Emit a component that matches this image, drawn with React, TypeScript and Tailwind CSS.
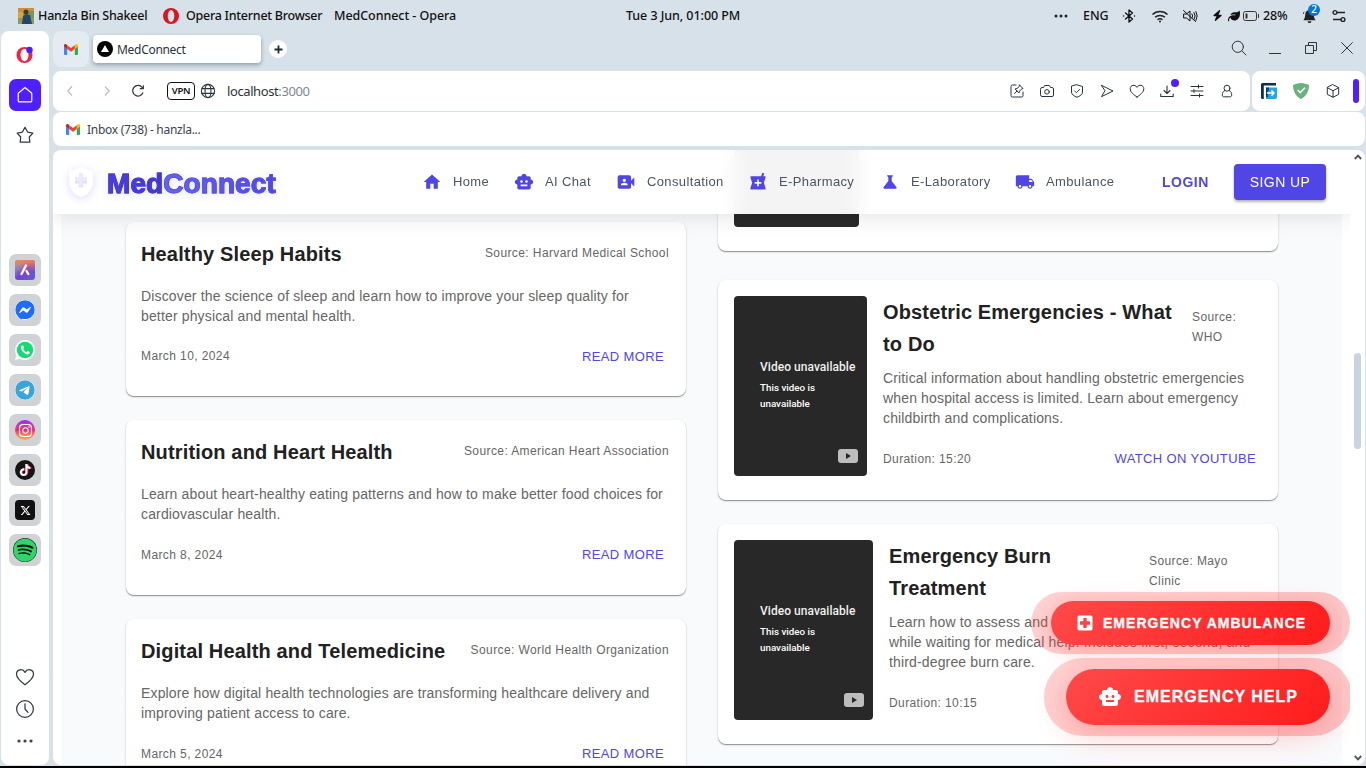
import type { ReactNode } from "react";
import { MdHome, MdSmartToy, MdVideoCameraFront, MdLocalPharmacy, MdScience, MdLocalShipping, MdLocalHospital, MdHealthAndSafety } from "react-icons/md";
import { FaTiktok, FaXTwitter, FaSpotify, FaFacebookMessenger, FaInstagram, FaTelegram, FaLeaf, FaBolt } from "react-icons/fa6";

function Line({ size = 16, w = 1.3, children, className = "" }: { size?: number; w?: number; children: ReactNode; className?: string }) {
  return (
    <svg width={size} height={size} viewBox="0 0 16 16" fill="none" stroke="currentColor" strokeWidth={w} strokeLinecap="round" strokeLinejoin="round" className={"shrink-0 " + className}>
      {children}
    </svg>
  );
}

function Gmail() {
  return (
    <svg width="14" height="11" viewBox="0 0 14 11" className="shrink-0">
      <path d="M0 2v8a1 1 0 0 0 1 1h2.2V4.4z" fill="#4285f4" />
      <path d="M14 2v8a1 1 0 0 1-1 1h-2.2V4.4z" fill="#34a853" />
      <path d="M10.8 1.2V5L14 2.6V1.5C14 .2 12.600-.400 11.600.400z" fill="#fbbc04" />
      <path d="M3.200 5V1.200L7 4l3.800-2.800V5L7 7.800z" fill="#ea4335" />
      <path d="M0 1.500v1.100L3.200 5V1.200L2.400.400C1.400-.400 0 .200 0 1.500z" fill="#c5221f" />
    </svg>
  );
}

function StatusBar() {
  return (
    <div className="flex h-[31px] shrink-0 items-center text-[12.500px] font-medium text-[#111]">
      <div className="ml-[18px] h-4 w-4 shrink-0">
        <svg width="16" height="16" viewBox="0 0 16 16">
          <rect width="16" height="16" fill="#8f9a5a" />
          <rect width="16" height="4" fill="#c9913e" />
          <rect y="4" width="5" height="6" fill="#d9a441" />
          <rect x="11" y="3" width="5" height="7" fill="#6f9a62" />
          <path d="M4 16l1-8 3-2 4 1 2 9z" fill="#24466b" />
          <circle cx="8" cy="4" r="2.500" fill="#4a3428" />
        </svg>
      </div>
      <div className="ml-1 w-[125px] pt-[2px] whitespace-nowrap tracking-[-0.220px]">Hanzla Bin Shakeel</div>
      <svg width="16" height="16" viewBox="0 0 16 16" className="shrink-0">
        <ellipse cx="8" cy="8" rx="8" ry="8" fill="#d8141c" />
        <ellipse cx="8" cy="8" rx="3.300" ry="6" fill="#d7e1e9" />
      </svg>
      <div className="ml-[7px] w-[148px] pt-[2px] whitespace-nowrap tracking-[-0.260px]">Opera Internet Browser</div>
      <div className="w-[292px] pt-[2px] whitespace-nowrap tracking-[-0.060px]">MedConnect - Opera</div>
      <div className="w-[428px] pt-[2px] whitespace-nowrap tracking-[-0.060px]">Tue 3 Jun, 01:00 PM</div>
      <svg width="14" height="4" viewBox="0 0 14 4" className="shrink-0" fill="#222"><circle cx="2" cy="2" r="1.500" /><circle cx="7" cy="2" r="1.500" /><circle cx="12" cy="2" r="1.500" /></svg>
      <div className="ml-[15px] w-[38px] pt-[2px] tracking-[-0.050px]">ENG</div>
      <Line size={16} w={1.300} className="w-4"><path d="M4.500 5l7 6L8 14V2l3.500 3-7 6M2.500 8h.1M13.500 8h.1" /></Line>
      <svg width="18" height="14" viewBox="0 0 18 14" fill="none" stroke="#222" strokeWidth="1.500" className="ml-[14px] shrink-0"><path d="M1.500 5.500a11 11 0 0 1 15 0M4 8.300a7.500 7.500 0 0 1 10 0M6.500 10.800a3.800 3.800 0 0 1 5 0" /><circle cx="9" cy="12.500" r="1" fill="#222" stroke="none" /></svg>
      <Line size={16} w={1} className="ml-[13px]"><path d="M2 6h2.500L8 3v10L4.500 10H2zM10 6q1.500 2 0 4M12 4.500q2.500 3.500 0 7M14 3.500q2.500 4.500 0 9M1.500 2.500l12 11" /></Line>
      <FaBolt size={11} className="ml-[14px] shrink-0" />
      <FaLeaf size={12} className="ml-[5px] shrink-0" />
      <svg width="16" height="10" viewBox="0 0 16 10" fill="none" stroke="#333" className="ml-[3px] shrink-0"><rect x=".5" y=".5" width="13" height="9" rx="2" /><path d="M15.500 3v4" /><rect x="2.500" y="2.500" width="2" height="5" fill="#333" stroke="none" /></svg>
      <div className="ml-1 w-[39px] pt-[2px] tracking-[-0.100px]">28%</div>
      <div className="relative h-[22px] w-5 shrink-0">
        <svg width="15" height="15" viewBox="0 0 16 16" className="absolute top-[4px] left-0" fill="#222"><path d="M8 1a4.500 4.500 0 0 0-4.500 4.500C3.500 9 2 11 1.500 12h13c-.5-1-2-3-2-6.500A4.500 4.500 0 0 0 8 1zM6 13a2 2 0 0 0 4 0zM2.500 1.500L1 5l1 .4z" /></svg>
        <div className="absolute -top-[1px] left-[6px] flex h-3 w-3 items-center justify-center rounded-full bg-[#0078d4] text-[10px] text-white">2</div>
      </div>
      <svg width="14" height="14" viewBox="0 0 14 14" fill="none" stroke="#222" strokeWidth="1.400" className="ml-[10px] shrink-0"><circle cx="3" cy="3.500" r="1.900" /><path d="M5 3.500h8M1 10.500h8" /><circle cx="11" cy="10.500" r="1.900" /></svg>
    </div>
  );
}

function AppTile({ children }: { children: ReactNode }) {
  return <div className="flex h-8 w-8 shrink-0 items-center justify-center rounded-[7px] bg-[#d0d3d6]">{children}</div>;
}

function Sidebar() {
  return (
    <div className="ml-px flex h-[734px] w-12 shrink-0 flex-col items-center rounded-lg bg-white text-[#2f3a42]">
      <svg width="18" height="18" viewBox="0 0 18 18" className="mt-[15px] shrink-0">
        <ellipse cx="8.500" cy="9" rx="8" ry="8" fill="#fa1e3c" />
        <ellipse cx="8.500" cy="9" rx="4" ry="6.200" fill="#fff" />
        <circle cx="13.500" cy="4" r="3.200" fill="#4b1eff" />
      </svg>
      <div className="mt-[15px] flex h-8 w-8 shrink-0 items-center justify-center rounded-[7px] bg-[#4f1fff] text-white">
        <Line size={18} w={1.100}><path d="M2 6.500L8 1.300l6 5.200v6.500a1.200 1.200 0 0 1-1.200 1.200H3.200A1.200 1.200 0 0 1 2 13z" /></Line>
      </div>
      <Line size={18} w={1.100} className="mt-[15px]"><path d="M8 1.200l2.300 4.200 4.700 1-3.200 3.400.5 4.600H3.700l.5-4.600L1 6.400l4.700-1z" /></Line>
      <div className="mt-[110px] flex shrink-0 flex-col gap-2">
        <AppTile>
          <div className="flex h-5 w-5 items-center justify-center rounded-[3px] bg-linear-to-br from-[#4bb8e8] via-[#7a3fd0] to-[#5b5fd8]">
            <div className="flex h-5 w-5 items-center justify-center rounded-[3px] bg-linear-to-b from-[#f2844f] to-transparent to-60%">
              <svg width="14" height="14" viewBox="0 0 14 14" fill="none" stroke="#fff" strokeWidth="2.400" strokeLinecap="round"><path d="M8 2.500L3.500 11M8.500 8l1.800 3" /></svg>
            </div>
          </div>
        </AppTile>
        <AppTile><FaFacebookMessenger size={20} color="#1b6cff" className="rounded-full bg-white" /></AppTile>
        <AppTile>
          <svg width="20" height="20" viewBox="0 0 20 20"><path d="M10 0a10 10 0 0 0-8.500 15L0 20l5-1.300A10 10 0 1 0 10 0z" fill="#fff" /><circle cx="10" cy="10" r="8.200" fill="#12db70" /><path d="M7.300 5.200c-1.800.8-2 2.800-.4 5.300 1.800 2.600 4.600 4.400 6.500 3.800 1.200-.4 1.600-1.500 1.300-2.200l-2-1-1.200 1.200c-1.500-.6-2.700-1.900-3.300-3.200l.9-1.100-.9-2.500z" fill="#fff" /></svg>
        </AppTile>
        <AppTile><FaTelegram size={20} color="#37a5de" className="rounded-full bg-white" /></AppTile>
        <AppTile>
          <div className="flex h-5 w-5 items-center justify-center rounded-full bg-linear-to-t from-[#ffb02e] via-[#f5206a] to-[#a315f5] text-white"><FaInstagram size={15} /></div>
        </AppTile>
        <AppTile><div className="flex h-5 w-5 items-center justify-center rounded-full bg-[#151515] text-white"><FaTiktok size={12} className="drop-shadow-[1px_0_0_#fe2c55]" /></div></AppTile>
        <AppTile><div className="flex h-5 w-5 items-center justify-center rounded-[4px] bg-[#111] text-white"><FaXTwitter size={11} /></div></AppTile>
        <AppTile><FaSpotify size={24} color="#2fd566" className="rounded-full bg-[#111]" /></AppTile>
      </div>
      <Line size={20} w={1} className="mt-[101px] mr-px"><path d="M8 14.200C5 12 1.200 9.200 1.200 5.600c0-3.800 5-4.800 6.800-1.300 1.800-3.500 6.800-2.500 6.800 1.300 0 3.600-3.800 6.400-6.800 8.600z" /></Line>
      <Line size={20} w={1} className="mt-3 mr-px"><circle cx="8" cy="8" r="6.700" /><path d="M8 3.800V8l2.400 2.700" /></Line>
      <svg width="16" height="4" viewBox="0 0 16 4" fill="#3a434a" className="mt-5 shrink-0"><circle cx="2" cy="2" r="1.600" /><circle cx="8" cy="2" r="1.600" /><circle cx="14" cy="2" r="1.600" /></svg>
    </div>
  );
}

function TabBar() {
  return (
    <div className="flex h-10 shrink-0 items-start text-[#2a343c]">
      <div className="flex h-9 w-9 items-center justify-center rounded-lg bg-[#e4ebf1]"><Gmail /></div>
      <div className="mt-1 ml-1 flex h-7 w-[168px] items-center rounded-[4px] bg-white pl-1 shadow-[0_2px_4px_rgba(60,75,90,0.450)]">
        <svg width="16" height="16" viewBox="0 0 16 16"><circle cx="8" cy="8" r="8" /><path d="M8 4l4 7H4z" fill="#fff" /></svg>
        <span className="ml-1 pt-px text-[12px] tracking-[-0.300px]">MedConnect</span>
      </div>
      <div className="mt-[9px] ml-2 flex h-[18px] w-[18px] items-center justify-center rounded-full bg-white">
        <svg width="9" height="9" viewBox="0 0 9 9" stroke="#1e2c36" strokeWidth="1.800"><path d="M4.500.5v8M.5 4.500h8" /></svg>
      </div>
      <div className="mt-[9px] mr-[13px] ml-auto flex items-center text-[#333]">
        <Line size={16} w={1}><circle cx="6.800" cy="6.800" r="5.600" /><path d="M11 11l4 4" /></Line>
        <svg width="12" height="14" viewBox="0 0 12 14" stroke="#333" className="ml-[22px]"><path d="M0 12.500h12" /></svg>
        <svg width="12" height="12" viewBox="0 0 12 12" fill="none" stroke="#333" className="ml-6"><path d="M.5 3.500h8v8h-8zM3.500 3V.5h8v8H9" /></svg>
        <svg width="12" height="12" viewBox="0 0 12 12" stroke="#333" className="ml-6"><path d="M.3.3l11.400 11.400M11.700.3L.3 11.700" /></svg>
      </div>
    </div>
  );
}

function AddressBar() {
  return (
    <div className="mr-px flex h-10 shrink-0 gap-[2px] text-[#2a343c]">
      <div className="flex w-[1197px] items-center rounded-lg bg-white">
        <svg width="6" height="10" viewBox="0 0 6 10" fill="none" stroke="#b4bac0" strokeWidth="1.100" className="ml-[14px]"><path d="M5 .5L.8 5 5 9.500" /></svg>
        <svg width="6" height="10" viewBox="0 0 6 10" fill="none" stroke="#b4bac0" strokeWidth="1.100" className="ml-[31px]"><path d="M1 .5L5.200 5 1 9.500" /></svg>
        <svg width="14" height="14" viewBox="0 0 14 14" fill="none" stroke="#333" strokeWidth="1.200" className="ml-[21px]"><path d="M12 8.500A5.300 5.300 0 1 1 11.200 3.500L12 4.500M12.300 1.200v3.500H8.800" /></svg>
        <div className="ml-[22px] flex h-[18px] w-7 items-center justify-center rounded-[4px] border border-[#111] pt-px text-[9.500px] font-semibold tracking-[-0.300px] text-[#111]">VPN</div>
        <Line size={16} w={1.100} className="ml-[5px]"><circle cx="8" cy="8" r="6.600" /><ellipse cx="8" cy="8" rx="3" ry="6.600" /><path d="M2 5.600h12M2 10.400h12" /></Line>
        <div className="ml-[11px] pt-[2px] text-[13px] tracking-[-0.400px]">localhost<span className="text-[#7b8894]">:3000</span></div>
        <div className="mr-[15px] ml-auto flex items-center gap-[14px]">
          <Line w={1}><path d="M7 2H3.500A1.500 1.500 0 0 0 2 3.500v9A1.500 1.500 0 0 0 3.500 14h9a1.500 1.500 0 0 0 1.500-1.500V9M5.500 10.500L8 8M10.500 2l3.500 3.500-1.500.5-2 2.200L10 10 6 6l2-.5 2.200-2z" /></Line>
          <Line w={1}><path d="M1.500 6A1.500 1.500 0 0 1 3 4.500h1.500L5.700 2.500h4.600l1.200 2H13A1.500 1.500 0 0 1 14.500 6v6a1.500 1.500 0 0 1-1.500 1.500H3A1.500 1.500 0 0 1 1.500 12z" /><circle cx="8" cy="8.800" r="2.300" /></Line>
          <Line w={1}><path d="M8 1.800l5.500 1.700V9c0 2.500-2.500 4-5.500 5.300C5 13 2.500 11.500 2.500 9V3.500z" /><path d="M5.700 8l1.700 1.700 3.200-3.200" /></Line>
          <Line w={1}><path d="M2.500 2.300L14 8 2.500 13.700 5.800 8z" /></Line>
          <Line w={1}><path d="M8 14C5 12 1.200 9.300 1.200 5.700c0-3.800 5-4.700 6.800-1.300 1.800-3.400 6.800-2.500 6.800 1.300C14.800 9.300 11 12 8 14z" /></Line>
          <div className="relative h-4 w-4"><Line w={1.100}><path d="M8 3v7.500M5 7.500L8 10.500l3-3M1.800 11v2.500h12.400V11" /></Line><div className="absolute -top-[4px] left-[12px] h-2 w-2 rounded-full bg-[#4f1fff]" /></div>
          <Line w={1}><path d="M2 3.500h12M2 8h12M2 12.500h12M9.500 2v3M5 6.500v3M10.500 11v3" /></Line>
          <Line w={1}><circle cx="8" cy="5.200" r="3" /><path d="M5.800 7.500C4 8.500 3.300 10 3.300 12c0 1.200.7 1.800 1.800 1.800h5.800c1.100 0 1.800-.6 1.800-1.800 0-2-.7-3.500-2.500-4.500" /></Line>
        </div>
      </div>
      <div className="flex flex-1 items-center rounded-lg bg-white pl-[9px]">
        <svg width="16" height="16" viewBox="0 0 16 16"><path d="M3 16H1.500A1.500 1.500 0 0 1 0 14.500v-13A1.500 1.500 0 0 1 1.500 0H15v2.500H2.800V16z" fill="#0d3050" /><path d="M5 4.500h11V14a2 2 0 0 1-2 2H5z" fill="#22a8dc" /><path d="M5 4.500h3v3H7V14H5z" fill="#123f63" /><path d="M6 10h7M10.500 7.500L13 10l-2.500 2.800" stroke="#fff" strokeWidth="1.500" fill="none" /></svg>
        <svg width="16" height="16" viewBox="0 0 16 16" className="ml-4"><path d="M8 0c3 .3 5.500.9 8 1.900 0 6-2.500 11-8 14.100C2.500 13 0 8 0 1.900 2.500.9 5 .3 8 0z" fill="#68b37b" /><path d="M4.700 7l2.500 2.500L12 4.800" stroke="#fff" strokeWidth="1.600" fill="none" /></svg>
        <Line w={1} className="ml-4"><path d="M8 1.700l5.700 3v6.600L8 14.300l-5.700-3V4.700zM2.300 4.700L8 7.700l5.700-3M8 7.700v6.600" /></Line>
        <div className="ml-3 h-6 w-[6px] rounded-full bg-[#4f1fff]" />
      </div>
    </div>
  );
}

const nav = [
  { label: "Home", Icon: MdHome, cls: "w-[92px]" },
  { label: "AI Chat", Icon: MdSmartToy, cls: "w-[102px]" },
  { label: "Consultation", Icon: MdVideoCameraFront, cls: "w-[132px]" },
  { label: "E-Pharmacy", Icon: MdLocalPharmacy, cls: "w-[132px]" },
  { label: "E-Laboratory", Icon: MdScience, cls: "w-[135px]" },
  { label: "Ambulance", Icon: MdLocalShipping, cls: "w-[147px]" },
];

function Header() {
  return (
    <header className="absolute inset-x-0 top-0 flex h-16 items-center bg-white/95 pl-3 shadow-[0_4px_20px_rgba(0,0,0,0.100)] backdrop-blur-[10px]">
      <div className="relative h-9 w-8 shrink-0 text-white drop-shadow-[0_2px_4px_rgba(79,70,229,0.200)]">
        <MdHealthAndSafety size={36} className="absolute -left-[2px] top-0" />
        <svg width="12" height="12" viewBox="0 0 12 12" className="absolute left-[10px] top-[9px]" fill="#eceafd"><path d="M4 0h4v4h4v4H8v4H4V8H0V4h4z" /></svg>
      </div>
      <div className="ml-[10px] w-[315px] pt-1 text-[28px] leading-10 font-black tracking-[0.080px] drop-shadow-[0_2px_4px_rgba(79,70,229,0.140)]">
        <span className="bg-linear-to-r from-[#4a3fdc] to-[#4338ca] bg-clip-text text-transparent [-webkit-text-stroke:1px_#463bd3]">Med</span>
        <span className="bg-linear-to-r from-[#6366f1] to-[#4f46e5] bg-clip-text text-transparent [-webkit-text-stroke:1px_#5850ea]">Connect</span>
      </div>
      {nav.map(({ label, Icon, cls }) => (
        <div key={label} className={"flex shrink-0 items-center text-[13px] tracking-[0.370px] text-[#4b5563] " + cls}>
          <Icon size={20} color="#4f46e5" className="mr-[11px] shrink-0" />
          <span className="whitespace-nowrap">{label}</span>
        </div>
      ))}
      <div className="w-[72px] text-[14px] font-bold tracking-[0.500px] text-[#4f46e5]">LOGIN</div>
      <div className="flex h-9 w-[92px] items-center justify-center rounded-[4px] bg-[#4f46e5] text-[14px] tracking-[0.400px] text-white shadow-[0_2px_3px_rgba(0,0,0,0.300)]">SIGN UP</div>
    </header>
  );
}

const cardShadow = "shadow-[0_1px_1px_rgba(0,0,0,0.380),0_1px_3px_rgba(0,0,0,0.100)]";

function Article({ title, source, text, date }: { title: string; source: string; text: string; date: string }) {
  return (
    <div className={"rounded-lg bg-white pt-4 pr-[17px] pb-6 pl-[15px] " + cardShadow}>
      <div className="mb-4 flex items-center justify-between">
        <h3 className="text-[20px] leading-8 font-bold tracking-[0.150px] text-[#212121]">{title}</h3>
        <span className="pb-[2px] text-[12px] leading-5 tracking-[0.400px] text-[#666]">{source}</span>
      </div>
      <p className="text-[14px] leading-[20px] tracking-[0.150px] text-[#666]">{text}</p>
      <div className="mt-4 flex items-center justify-between">
        <span className="pb-[2px] text-[12px] tracking-[0.400px] text-[#666]">{date}</span>
        <span className="px-[5px] py-1 text-[13px] leading-[22.750px] tracking-[0.371px] text-[#4f46e5]">READ MORE</span>
      </div>
    </div>
  );
}

function Thumb({ cls }: { cls: string }) {
  return (
    <div className={"relative h-[180px] shrink-0 rounded-[4px] bg-[#282828] pt-[63px] pl-[26px] font-['Roboto',sans-serif] text-white " + cls}>
      <div className="text-[12px] leading-4 font-medium tracking-[0.040px] whitespace-nowrap text-[#eee]">Video unavailable</div>
      <div className="mt-[5px] w-[70px] text-[9.800px] leading-4 font-medium">This video is unavailable</div>
      <svg width="20" height="14" viewBox="0 0 20 14" className="absolute right-[9px] bottom-[13px]"><rect width="20" height="14" rx="3" fill="#bdbdbd" /><path d="M8 4l5 3-5 3z" fill="#282828" /></svg>
    </div>
  );
}

function Video({ title, titleCls, source, text, duration, thumb }: { title: string; titleCls: string; source: string; text: string; duration: string; thumb: string }) {
  return (
    <div className={"flex h-[220px] gap-4 rounded-lg bg-white p-4 " + cardShadow}>
      <Thumb cls={thumb} />
      <div className="min-w-0 flex-1">
        <div className="mb-2 flex items-center">
          <h3 className={"shrink-0 text-[20px] leading-8 font-bold tracking-[0.150px] text-[#212121] " + titleCls}>{title}</h3>
          <span className="pb-[2px] text-[12px] leading-5 tracking-[0.400px] text-[#666]">{source}</span>
        </div>
        <p className="text-[14px] leading-[20px] tracking-[0.150px] text-[#666]">{text}</p>
        <div className="mt-4 flex items-center justify-between">
          <span className="text-[12px] tracking-[0.400px] text-[#666]">{duration}</span>
          <span className="mr-[1px] px-[5px] py-1 text-[13px] leading-[22.750px] tracking-[0.371px] whitespace-nowrap text-[#4f46e5]">WATCH ON YOUTUBE</span>
        </div>
      </div>
    </div>
  );
}

function Emergency() {
  return (
    <div className="absolute right-0 bottom-0 h-[200px] w-[380px] overflow-hidden">
      <div className="absolute right-5 bottom-10 flex flex-col items-end gap-6 font-bold text-white">
        <div className="relative flex h-11 w-[279px] items-center rounded-full bg-linear-[135deg] from-[#ff4b4b] to-[#ff1a1a] pl-[25px] shadow-[0_4px_20px_rgba(255,50,50,0.300)]">
          <div className="absolute -inset-x-5 -top-[9px] -bottom-[9px] rounded-full bg-linear-[135deg] from-[#ff4b4b] to-[#ff1a1a] opacity-25" />
          <MdLocalHospital size={20} className="relative -ml-[1px] shrink-0" />
          <span className="relative ml-2 pt-px text-[14px] tracking-[1.030px] whitespace-nowrap [-webkit-text-stroke:0.300px_#fff]">EMERGENCY AMBULANCE</span>
        </div>
        <div className="relative flex h-14 w-[264px] items-center rounded-full bg-linear-[135deg] from-[#ff4b4b] to-[#ff1a1a] pl-8 shadow-[0_8px_32px_rgba(255,50,50,0.300)]">
          <div className="absolute -inset-x-[22px] -top-[11px] -bottom-[11px] rounded-full bg-linear-[135deg] from-[#ff4b4b] to-[#ff1a1a] opacity-25" />
          <MdSmartToy size={24} className="relative shrink-0" />
          <span className="relative ml-[12px] text-[16px] tracking-[1px] whitespace-nowrap [-webkit-text-stroke:0.300px_#fff]">EMERGENCY HELP</span>
        </div>
      </div>
    </div>
  );
}

function Page() {
  return (
    <div className="mt-1 mr-px flex h-[615px] overflow-hidden rounded-lg bg-white font-['Liberation_Sans',Arial,sans-serif]">
      <div className="relative h-[615px] w-[1297px] shrink-0 overflow-hidden">
        <div className="mx-2 flex h-[615px] gap-8 bg-[#f9fafc] px-[65px]">
          <div className="flex w-[560px] shrink-0 flex-col gap-6 pt-[71.700px]">
            <Article title="Healthy Sleep Habits" source="Source: Harvard Medical School" text="Discover the science of sleep and learn how to improve your sleep quality for better physical and mental health." date="March 10, 2024" />
            <Article title="Nutrition and Heart Health" source="Source: American Heart Association" text="Learn about heart-healthy eating patterns and how to make better food choices for cardiovascular health." date="March 8, 2024" />
            <Article title="Digital Health and Telemedicine" source="Source: World Health Organization" text="Explore how digital health technologies are transforming healthcare delivery and improving patient access to care." date="March 5, 2024" />
          </div>
          <div className="flex w-[560px] shrink-0 flex-col">
            <div className={"mb-[29px] h-[101px] shrink-0 rounded-b-lg bg-white px-4 " + cardShadow}>
              <div className="h-[77px] w-[125px] rounded-b-[4px] bg-[#282828]" />
            </div>
            <div className="flex flex-col gap-6">
              <Video thumb="w-[133px]" title="Obstetric Emergencies - What to Do" titleCls="w-[309px] pr-3" source="Source: WHO" text="Critical information about handling obstetric emergencies when hospital access is limited. Learn about emergency childbirth and complications." duration="Duration: 15:20" />
              <Video thumb="w-[139px]" title="Emergency Burn Treatment" titleCls="w-[260px] pr-16" source="Source: Mayo Clinic" text="Learn how to assess and treat different types of burns while waiting for medical help. Includes first, second, and third-degree burn care." duration="Duration: 10:15" />
            </div>
          </div>
        </div>
        <Header />
        <Emergency />
      </div>
      <div className="flex w-[15px] flex-col items-center">
        <svg width="8" height="6" viewBox="0 0 8 6" fill="none" stroke="#555" strokeWidth="1.900" className="mt-1 shrink-0"><path d="M.8 5L4 1.600 7.200 5" /></svg>
        <div className="mt-[193px] h-24 w-[7px] shrink-0 rounded-full bg-[#c8d4de]" />
        <svg width="8" height="6" viewBox="0 0 8 6" fill="none" stroke="#555" strokeWidth="1.900" className="mt-auto mb-1 shrink-0"><path d="M.8 1L4 4.400 7.200 1" /></svg>
      </div>
    </div>
  );
}

export default function App() {
  return (
    <div className="flex h-[768px] w-[1366px] flex-col overflow-hidden bg-[#d7e1e9] font-['Noto_Sans',sans-serif]">
      <StatusBar />
      <div className="flex h-[735px] shrink-0">
        <Sidebar />
        <div className="ml-1 flex w-[1313px] shrink-0 flex-col">
          <TabBar />
          <AddressBar />
          <div className="mt-px mr-px flex h-[34px] shrink-0 items-center rounded-lg bg-white pl-[13px] text-[#3a444c]">
            <Gmail />
            <span className="ml-[7px] pt-[2px] text-[12px] tracking-[-0.280px]">Inbox (738) - hanzla...</span>
          </div>
          <Page />
        </div>
      </div>
      <div className="h-[2px] shrink-0 bg-black" />
    </div>
  );
}
